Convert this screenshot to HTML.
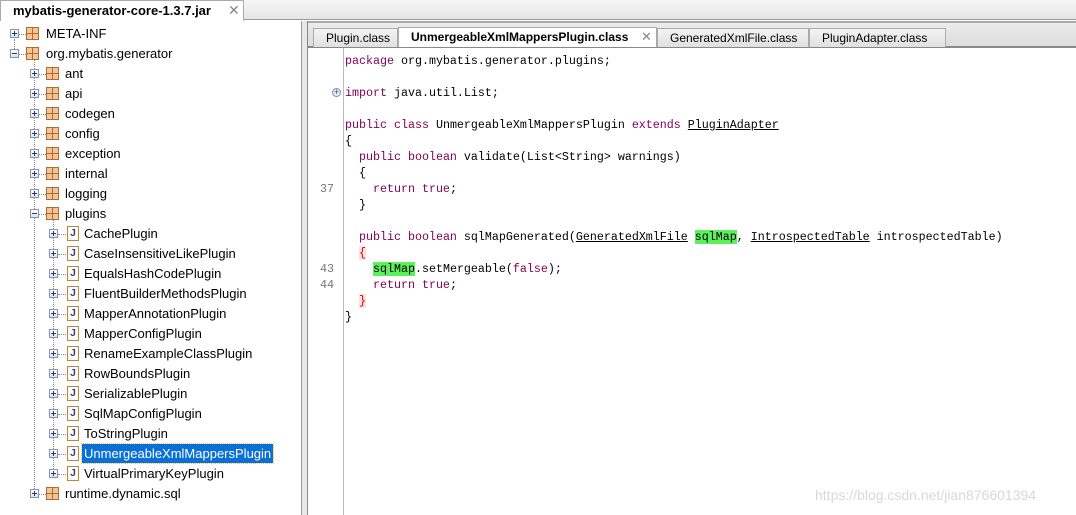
<!DOCTYPE html>
<html><head><meta charset="utf-8"><style>
*{margin:0;padding:0;box-sizing:border-box}
body{width:1076px;height:515px;background:#fff;position:relative;overflow:hidden;font-family:"Liberation Sans",sans-serif}
.a{position:absolute}
.row{position:absolute;height:20px;font-size:13px;line-height:20px;color:#000;white-space:nowrap}
.ex{position:absolute;width:9px;height:9px;border:1px solid #8a96a8;background:linear-gradient(#fff,#dde3ea);}
.ex:before{content:"";position:absolute;left:1px;top:3px;width:5px;height:1px;background:#1f3a80}
.ex.p:after{content:"";position:absolute;left:3px;top:1px;width:1px;height:5px;background:#1f3a80}
.hd{position:absolute;height:1px;border-top:1px dotted #888;width:9px}
.vd{position:absolute;width:1px;border-left:1px dotted #888}
.pk{position:absolute;width:13px;height:13px;background:#f3c795;border:1px solid #b06a35}
.pk:before{content:"";position:absolute;left:5px;top:0;width:1px;height:11px;background:#b06a35}
.pk:after{content:"";position:absolute;top:5px;left:0;height:1px;width:11px;background:#b06a35}
.jf{position:absolute;width:12px;height:15px;border:1px solid #b08a40;background:#fffdf4;font:bold 10px "Liberation Sans";color:#2a3e8a;text-align:center;line-height:13px}
.code{position:absolute;left:345px;font-family:"Liberation Mono",monospace;font-size:11.67px;line-height:16px;white-space:pre;color:#000}
.k{color:#7f0055}
.u{text-decoration:underline}
.g{background:#5cf05c}
.r{color:#e00000;background:#fde0e0}
.ln{position:absolute;left:318px;width:16px;text-align:right;font-family:"Liberation Mono",monospace;font-size:11.67px;color:#777;line-height:16px}
.tab{position:absolute;top:28px;height:19px;border:1px solid #aaa;border-bottom:none;background:linear-gradient(#f4f4f4,#e0e0e0);font-size:12px;line-height:18px;padding-left:12px;color:#000}
</style></head><body>
<div class="a" style="left:0;top:0;width:1076px;height:20px;background:linear-gradient(#f6f6f6,#e6e6e6);border-bottom:1px solid #999"></div>
<div class="a" style="left:0;top:0;width:244px;height:21px;background:#fff;border:1px solid #aaa;border-bottom:none;font-size:13px;font-weight:bold;line-height:19px;padding-left:12px">mybatis-generator-core-1.3.7.jar<span style="position:absolute;left:227px;font-weight:normal;color:#888;font-size:14px">✕</span></div>
<div class="a" style="left:0;top:21px;width:302px;height:494px;border-right:1px solid #999"></div>
<div class="a" style="left:302px;top:21px;width:6px;height:494px;background:#e8e8e8;border-right:1px solid #888"></div>
<div class="a" style="left:308px;top:21px;width:768px;height:27px;background:linear-gradient(#ececec,#dcdcdc);border-top:2px solid #aaa;border-bottom:2px solid #888"></div>
<div class="tab" style="left:313px;width:85px">Plugin.class</div>
<div class="tab" style="left:398px;width:259px;background:#fff;font-weight:bold;height:20px;top:27px">UnmergeableXmlMappersPlugin.class<span style="position:absolute;left:242px;font-weight:normal;color:#888;font-size:13px">✕</span></div>
<div class="tab" style="left:657px;width:152px">GeneratedXmlFile.class</div>
<div class="tab" style="left:809px;width:137px">PluginAdapter.class</div>
<div class="a" style="left:343px;top:48px;width:1px;height:467px;background:#bbb"></div>

<div class="vd" style="left:14px;top:39px;height:16px"></div>
<div class="vd" style="left:34px;top:59px;height:436px"></div>
<div class="vd" style="left:53px;top:219px;height:256px"></div>

<div id="tree"></div>
<script>
var rows=[
[0,33,'p','pk','META-INF'],[0,53,'m','pk','org.mybatis.generator'],
[1,73,'p','pk','ant'],[1,93,'p','pk','api'],[1,113,'p','pk','codegen'],[1,133,'p','pk','config'],[1,153,'p','pk','exception'],[1,173,'p','pk','internal'],[1,193,'p','pk','logging'],[1,213,'m','pk','plugins'],
[2,233,'p','jf','CachePlugin'],[2,253,'p','jf','CaseInsensitiveLikePlugin'],[2,273,'p','jf','EqualsHashCodePlugin'],[2,293,'p','jf','FluentBuilderMethodsPlugin'],[2,313,'p','jf','MapperAnnotationPlugin'],[2,333,'p','jf','MapperConfigPlugin'],[2,353,'p','jf','RenameExampleClassPlugin'],[2,373,'p','jf','RowBoundsPlugin'],[2,393,'p','jf','SerializablePlugin'],[2,413,'p','jf','SqlMapConfigPlugin'],[2,433,'p','jf','ToStringPlugin'],[2,453,'p','jf','UnmergeableXmlMappersPlugin'],[2,473,'p','jf','VirtualPrimaryKeyPlugin'],
[1,493,'p','pk','runtime.dynamic.sql']];
var h='';
rows.forEach(function(r){
 var ex=[10,30,49][r[0]], ic=[26,46,66][r[0]], tx=[46,65,84][r[0]], y=r[1]+1;
 h+='<div class="ex '+(r[2]=='p'?'p':'')+'" style="left:'+ex+'px;top:'+(y-5)+'px"></div>';
 h+='<div class="hd" style="left:'+(ex+9)+'px;top:'+y+'px;width:'+(ic-ex-9)+'px"></div>';
 if(r[3]=='pk') h+='<div class="pk" style="left:'+ic+'px;top:'+(y-7)+'px"></div>';
 else h+='<div class="jf" style="left:'+(ic+1)+'px;top:'+(y-8)+'px">J</div>';
 var sel=r[4]=='UnmergeableXmlMappersPlugin';
 h+='<div class="row" style="left:'+(tx-(sel?2:0))+'px;top:'+(y-10)+'px;'+(sel?'background:#0a6fd6;color:#fff;padding:0 2px;outline:1px dotted #f0c040;height:19px;line-height:19px;':'')+'">'+r[4]+'</div>';
});
document.getElementById('tree').innerHTML=h;
</script>

<div class="a" style="left:332px;top:88px;width:9px;height:9px;border:1px solid #7a8aa8;border-radius:50%;background:#e8eef8;font-size:9px;line-height:7px;text-align:center;color:#2a4a90">+</div>
<div class="ln" style="top:181px">37</div>
<div class="ln" style="top:261px">43</div>
<div class="ln" style="top:277px">44</div>
<div class="code" style="top:53px"><span class="k">package</span> org.mybatis.generator.plugins;

<span class="k">import</span> java.util.List;

<span class="k">public class</span> UnmergeableXmlMappersPlugin <span class="k">extends</span> <span class="u">PluginAdapter</span>
{
  <span class="k">public boolean</span> validate(List&lt;String&gt; warnings)
  {
    <span class="k">return true</span>;
  }

  <span class="k">public boolean</span> sqlMapGenerated(<span class="u">GeneratedXmlFile</span> <span class="g">sqlMap</span>, <span class="u">IntrospectedTable</span> introspectedTable)
  <span class="r">{</span>
    <span class="g">sqlMap</span>.setMergeable(<span class="k">false</span>);
    <span class="k">return true</span>;
  <span class="r">}</span>
}</div>
<div class="a" style="left:815px;top:487px;font-size:14px;color:#d8d8d8">https://blog.csdn.net/jian876601394</div>
</body></html>
